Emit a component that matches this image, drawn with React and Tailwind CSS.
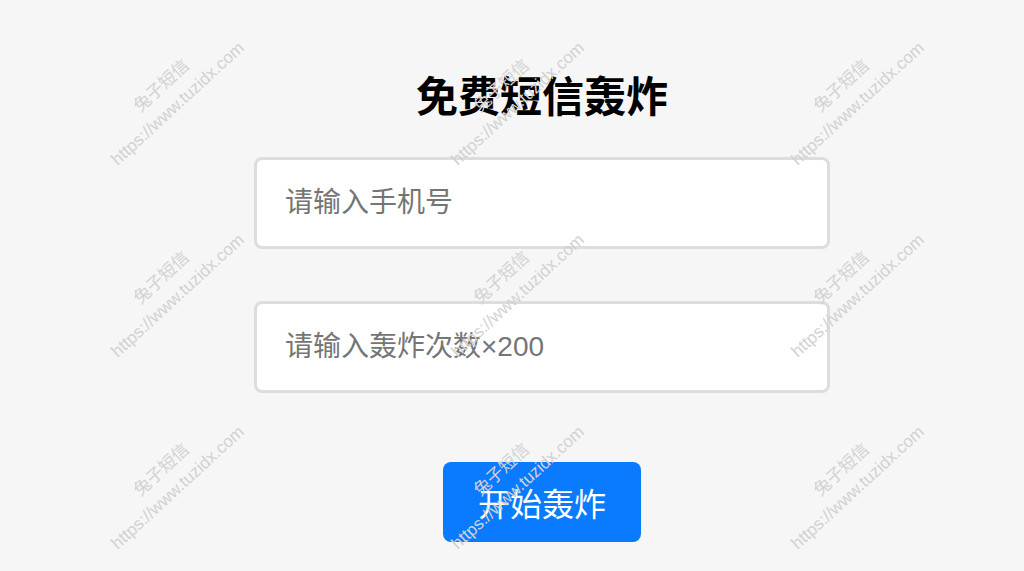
import React from "react";

const tiles = [];
for (let j = 0; j < 3; j++) {
  for (let i = 0; i < 3; i++) {
    tiles.push({ x: 170 + 340 * i, y: 95 + 192 * j });
  }
}

function Watermark() {
  return (
    <div className="pointer-events-none absolute inset-0 z-10">
      {tiles.map((t, k) => (
        <div key={k} className="absolute h-0 w-0" style={{ left: t.x, top: t.y }}>
          <div className="absolute left-0 top-0 -translate-x-1/2 -translate-y-1/2 -rotate-[42.5deg] whitespace-nowrap text-center text-[17px] leading-[24px] text-[#d2d2d2] [font-family:'Liberation_Sans','Noto_Sans_CJK_SC',sans-serif]">
            <div>兔子短信</div>
            <div>https://www.tuzidx.com</div>
          </div>
        </div>
      ))}
    </div>
  );
}

export default function App() {
  return (
    <div className="relative h-[571px] w-full overflow-hidden bg-[#f6f6f6] [font-family:'Liberation_Sans','Noto_Sans_CJK_SC',sans-serif]">
      <div className="ml-[254px] flex w-[576px] flex-col pt-[64px]">
        <h1 className="flex h-[58px] items-center justify-center text-[42px] font-bold text-black [font-family:'Noto_Sans_CJK_SC',sans-serif]">
          免费短信轰炸
        </h1>
        <input
          type="text"
          placeholder="请输入手机号"
          className="mt-[35px] h-[92px] w-full rounded-[8px] border-[3px] border-[#dddddd] bg-white pl-[28px] text-[28px] text-black outline-none placeholder:text-[#757575]"
        />
        <input
          type="text"
          placeholder="请输入轰炸次数×200"
          className="mt-[52px] h-[92px] w-full rounded-[8px] border-[3px] border-[#dddddd] bg-white pl-[28px] text-[28px] text-black outline-none placeholder:text-[#757575]"
        />
        <button className="mx-auto mt-[69px] flex h-[80px] w-[198px] items-center justify-center rounded-[8px] bg-[#0a7bff] text-[32px] text-white [font-family:'Noto_Sans_CJK_SC',sans-serif]">
          开始轰炸
        </button>
      </div>
      <Watermark />
    </div>
  );
}
